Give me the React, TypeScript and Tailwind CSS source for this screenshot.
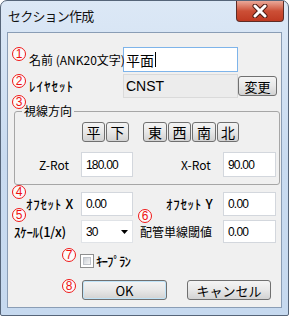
import React from "react";

const jp = "font-['Noto_Sans_CJK_JP',sans-serif]";
const num = "font-['Liberation_Sans',sans-serif]";

function Circ({ n, cls }: { n: string; cls: string }) {
  return (
    <div
      className={`absolute ${cls} w-[14px] h-[14px] rounded-full border-[1.5px] border-[#f01818] bg-[#fbfbfb] flex items-center justify-center text-[#f01010] text-[12px] leading-none ${num}`}
    >
      {n}
    </div>
  );
}

function Btn({ children, w, h = "h-[20px]", extra = "" }: { children: React.ReactNode; w: string; h?: string; extra?: string }) {
  return (
    <div
      className={`${w} ${h} rounded-[3px] border border-[#707070] bg-linear-to-b from-[#f4f4f4] via-[#e8e8e8] to-[#d2d2d2] flex items-center justify-center text-[13px] text-black leading-none ${jp} ${extra}`}
    >
      {children}
    </div>
  );
}

function Field({ w, children, h = "h-[25px]" }: { w: string; children: React.ReactNode; h?: string }) {
  return (
    <div className={`${w} ${h} bg-white border border-[#d3d7dd] flex items-center pl-[4px] text-[12px] tracking-[-0.8px] text-black ${num}`}>
      {children}
    </div>
  );
}

const hw = `whitespace-nowrap text-[13px] font-medium text-black ${jp}`;

export default function App() {
  return (
    <div className="w-[290px] h-[316px] bg-white">
      <div className="w-[289px] h-[316px] rounded-t-[7px] rounded-b-[2px] border border-[#566579] bg-linear-to-b from-[#dce8f6] via-[#c9dbf0] to-[#c6d9ef] flex flex-col px-[6px] pb-[7px]">
        {/* title bar */}
        <div className="h-[31px] flex items-start justify-between">
          <div className={`pl-[1px] pt-[7px] text-[13px] tracking-[-0.8px] leading-[16px] text-[#111] ${jp}`}>セクション作成</div>
          <div className="mr-[-2px] w-[48px] h-[21px] rounded-b-[4px] border border-t-0 border-[#5e2c26] bg-linear-to-b from-[#e9a899] via-[#cc4f36] to-[#bf3a22] flex items-center justify-center">
            <svg width="16" height="14" viewBox="0 0 16 14">
              <path d="M3 2 L13 12 M13 2 L3 12" stroke="#4a1a12" strokeWidth="5" strokeLinecap="round" />
              <path d="M3 2 L13 12 M13 2 L3 12" stroke="#ffffff" strokeWidth="3" strokeLinecap="round" />
            </svg>
          </div>
        </div>

        {/* client */}
        <div className="flex-1 border border-[#8a9db5] bg-[#f0f0f0] relative flex flex-col">
          {/* row 1 */}
          <div className="mt-[14px] h-[25px] flex items-center">
            <div className={`relative z-10 w-[115px] pl-[21px] whitespace-nowrap text-[12px] text-black ${jp}`}>名前 (ANK20文字)</div>
            <div className="w-[115px] h-[25px] bg-white border border-[#7eb4ea] flex items-center pl-[2px]">
              <span className={`text-[14px] text-black leading-none ${jp}`}>平面</span>
              <span className="w-[1px] h-[15px] bg-black ml-[1px]" />
            </div>
          </div>
          {/* row 2 */}
          <div className="mt-[2px] h-[24px] flex items-center">
            <div className={`w-[115px] pl-[21px] tracking-[1px] ${hw}`}>ﾚｲﾔｾｯﾄ</div>
            <div className={`w-[115px] h-[24px] bg-[#ececec] border border-[#dadada] flex items-center pl-[2px] text-[14px] text-black ${num}`}>CNST</div>
            <Btn w="w-[39px]">変更</Btn>
          </div>

          {/* group */}
          <div className="relative mt-[13px] ml-[6px] w-[266px] h-[74px] border border-[#a6a6a6] rounded-[3px] flex flex-col">
            <div className={`absolute left-[7px] top-[-9px] px-[2px] bg-[#f0f0f0] text-[12px] leading-[16px] text-black ${jp}`}>視線方向</div>
            <div className="mt-[10px] pl-[67px] flex items-center">
              <div className="flex gap-[1px]">
                <Btn w="w-[23px]" extra="text-[14px]">平</Btn>
                <Btn w="w-[23px]" extra="text-[14px]">下</Btn>
              </div>
              <div className="ml-[14px] flex gap-[1px]">
                <Btn w="w-[24px]" extra="text-[14px]">東</Btn>
                <Btn w="w-[23px]" extra="text-[14px]">西</Btn>
                <Btn w="w-[24px]" extra="text-[14px]">南</Btn>
                <Btn w="w-[22px]" extra="text-[14px]">北</Btn>
              </div>
            </div>
            <div className="mt-[10px] h-[25px] flex items-center">
              <div className={`w-[66px] pl-[24px] text-[12px] text-black ${jp}`}>Z-Rot</div>
              <Field w="w-[52px]">180.00</Field>
              <div className={`ml-[48px] w-[42px] text-[12px] text-black ${jp}`}>X-Rot</div>
              <Field w="w-[53px]">90.00</Field>
            </div>
          </div>

          {/* offset row */}
          <div className="mt-[7px] h-[24px] flex items-center">
            <div className={`w-[73px] pl-[18px] tracking-[0.7px] ${hw}`}>ｵﾌｾｯﾄ X</div>
            <Field w="w-[52px]" h="h-[24px]">0.00</Field>
            <div className={`w-[90px] pl-[33px] tracking-[0.7px] ${hw}`}>ｵﾌｾｯﾄ Y</div>
            <Field w="w-[53px]" h="h-[24px]">0.00</Field>
          </div>

          {/* scale row */}
          <div className="mt-[4px] h-[23px] flex items-center">
            <div className={`w-[73px] pl-[6px] tracking-[-0.3px] ${hw}`}>ｽｹｰﾙ(1/x)</div>
            <div className={`w-[52px] h-[23px] bg-white border border-[#e0e3e7] flex items-center justify-between pl-[4px] pr-[4px] text-[12px] tracking-[-0.8px] text-black ${num}`}>
              <span>30</span>
              <svg width="7" height="4" viewBox="0 0 7 4"><path d="M0 0 H7 L3.5 4 Z" fill="#000" /></svg>
            </div>
            <div className={`w-[90px] pl-[7px] whitespace-nowrap text-[12px] text-black ${jp}`}>配管単線閾値</div>
            <Field w="w-[53px]" h="h-[23px]">0.00</Field>
          </div>

          {/* checkbox row */}
          <div className="mt-[11px] h-[14px] flex items-center pl-[72px]">
            <div className="w-[14px] h-[14px] border border-[#8e8f8f] bg-white p-[2px]">
              <div className="w-full h-full bg-linear-to-br from-[#cbcfd5] to-[#f6f6f6] border border-[#c0c4ca]" />
            </div>
            <div className={`ml-[2px] tracking-[-1px] ${hw}`}>ｷｰﾌﾟﾗﾝ</div>
          </div>

          {/* buttons */}
          <div className="mt-[12px] flex pl-[74px] gap-[20px]">
            <Btn w="w-[85px]" extra="border-[#3c7fb1] shadow-[inset_0_0_0_1px_#bfe3f8] font-['Liberation_Sans',sans-serif]">OK</Btn>
            <Btn w="w-[84px]">キャンセル</Btn>
          </div>

          <Circ n="1" cls="left-[4px] top-[14px]" />
          <Circ n="2" cls="left-[4px] top-[41px]" />
          <Circ n="3" cls="left-[4px] top-[62px]" />
          <Circ n="4" cls="left-[4px] top-[152px]" />
          <Circ n="5" cls="left-[4px] top-[175px]" />
          <Circ n="6" cls="left-[130px] top-[176px]" />
          <Circ n="7" cls="left-[54px] top-[215px]" />
          <Circ n="8" cls="left-[54px] top-[246px]" />
        </div>
      </div>
    </div>
  );
}
